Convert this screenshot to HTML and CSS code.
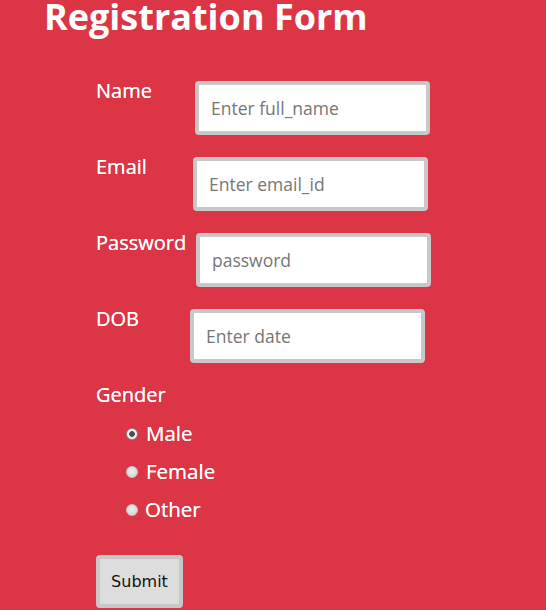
FILE: index.html
```html
<!DOCTYPE html>
<html lang="en">
<head>
<meta charset="utf-8">
<title>Registration Form</title>
<link rel="stylesheet" href="styles.css">
</head>
<body>
<h1 class="title">Registration Form</h1>
<form class="form">
  <div class="row">
    <label class="label label-name" for="name">Name</label>
    <input class="field" id="name" type="text" placeholder="Enter full_name">
  </div>
  <div class="row">
    <label class="label label-email" for="email">Email</label>
    <input class="field" id="email" type="text" placeholder="Enter email_id">
  </div>
  <div class="row">
    <label class="label label-password" for="pw">Password</label>
    <input class="field" id="pw" type="password" placeholder="password">
  </div>
  <div class="row">
    <label class="label label-dob" for="dob">DOB</label>
    <input class="field" id="dob" type="text" placeholder="Enter date">
  </div>
  <div class="gender">
    <div class="gender-title">Gender</div>
    <label class="option"><input class="radio" type="radio" name="g" checked><span>Male</span></label>
    <label class="option"><input class="radio" type="radio" name="g"><span>Female</span></label>
    <label class="option option-other"><input class="radio" type="radio" name="g"><span>Other</span></label>
  </div>
  <button class="submit" type="button">Submit</button>
</form>
</body>
</html>
```

FILE: styles.css
```css
html, body {
  margin: 0;
  padding: 0;
}
body {
  background: #dc3545;
  color: #ffffff;
  font-family: "Open Sans", "Noto Sans", sans-serif;
  height: 610px;
  overflow: hidden;
}
.title {
  margin: 0 0 0 44px;
  font-size: 36px;
  line-height: 34px;
  font-weight: 700;
}
.form {
  margin: 47px 0 0 96px;
  display: flex;
  flex-direction: column;
  align-items: flex-start;
}
.row {
  display: flex;
  align-items: flex-start;
  margin-bottom: 22px;
}
.label {
  font-size: 20px;
  line-height: 19px;
  flex: none;
  text-shadow: 0 0 0.4px #ffffff;
}
.label-name { width: 99px; }
.label-email { width: 97px; }
.label-password { width: 100px; }
.label-dob { width: 94px; }
.field {
  box-sizing: border-box;
  width: 235px;
  height: 54px;
  border: 4px solid #c8c8c8;
  border-radius: 4px;
  background: #ffffff;
  padding: 0 12px;
  font-family: "Open Sans", "Noto Sans", sans-serif;
  font-size: 17.5px;
  color: #333;
  outline: none;
  margin: 0;
}
.field::placeholder {
  color: #767676;
}
.gender {
  margin-top: -9px;
  display: flex;
  flex-direction: column;
}
.gender-title {
  font-size: 20px;
  line-height: 38px;
  text-shadow: 0 0 0.4px #ffffff;
}
.option {
  display: flex;
  align-items: center;
  height: 38px;
  font-size: 20.5px;
  line-height: 38px;
  padding-left: 30px;
  text-shadow: 0 0 0.4px #ffffff;
}
.option span {
  margin-left: 8px;
}
.option-other span {
  margin-left: 7px;
}
.radio {
  appearance: none;
  -webkit-appearance: none;
  width: 12px;
  height: 12px;
  margin: 2px 0 0 0;
  border-radius: 50%;
  box-sizing: border-box;
  border: 1px solid #c4c4c4;
  background: radial-gradient(circle at 50% 40%, #eeeeee 0%, #d8d8d8 70%);
}
.radio:checked {
  border: 1px solid #8a8a8a;
  background: radial-gradient(circle, #4e4e4e 0 2.6px, #f4f4f4 3.1px 100%);
}
.submit {
  margin-top: 27px;
  box-sizing: border-box;
  width: 87px;
  height: 53px;
  border: 4px solid #c8c8c8;
  border-radius: 4px;
  background: #dddddd;
  font-family: "DejaVu Sans", Verdana, sans-serif;
  font-size: 16px;
  color: #111111;
  padding: 0;
}
```
